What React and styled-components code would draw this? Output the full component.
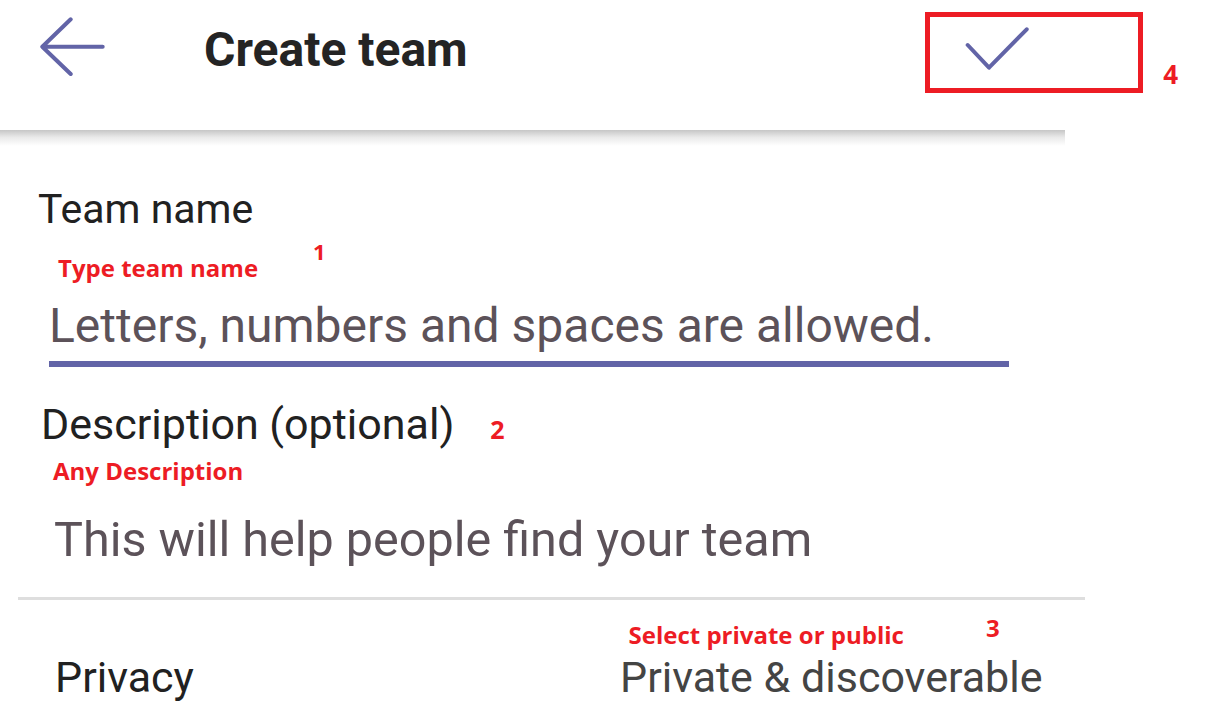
import React from "react";
import styled, { createGlobalStyle } from "styled-components";

const GlobalStyle = createGlobalStyle`
  body {
    margin: 0;
    background: #fff;
    font-family: Roboto, "Noto Sans", sans-serif;
  }
`;

const Page = styled.div`
  width: 1215px;
  height: 725px;
  overflow: hidden;
  background: #fff;
`;

const Header = styled.header`
  position: relative;
  width: 1065px;
  height: 130px;
  box-sizing: border-box;
  padding-top: 12px;
  display: flex;
  align-items: flex-start;
  background: #fff;

  &::after {
    content: "";
    position: absolute;
    left: 0;
    right: 0;
    top: 100%;
    height: 16px;
    background: linear-gradient(#c6c6c6, #e9e9e9 45%, rgba(255, 255, 255, 0));
  }
`;

const BackButton = styled.button`
  flex: none;
  margin: 5px 0 0 40px;
  padding: 0;
  border: 0;
  background: none;
  width: 66px;
  height: 60px;
  cursor: pointer;
`;

const Title = styled.h1`
  margin: 8.6px 0 0 98px;
  font-size: 48px;
  line-height: 1.2;
  font-weight: 700;
  color: #242424;
`;

const ConfirmGroup = styled.div`
  flex: none;
  display: flex;
  align-items: flex-start;
  margin-left: auto;
  margin-right: -113px;
`;

const CheckFrame = styled.div`
  width: 218px;
  height: 81px;
  box-sizing: border-box;
  border: 5px solid #ed1c24;
  padding: 9px 0 0 35px;
`;

const Form = styled.main`
  margin-left: 18px;
  width: 1067px;
  padding-top: 55px;
  display: flex;
  flex-direction: column;
`;

const FieldLabel = styled.div`
  margin: ${(p) => p.$top}px 0 0 ${(p) => p.$indent}px;
  font-size: ${(p) => p.$size}px;
  line-height: 1.2;
  color: #212121;
`;

const Note = styled.div`
  display: flex;
  align-items: flex-start;
  margin: ${(p) => p.$top || 0}px 0 0 ${(p) => p.$indent}px;
  font-family: "Open Sans", "Liberation Sans", sans-serif;
  font-weight: 700;
  font-size: 24px;
  line-height: 1.2;
  color: #ed1c24;
`;

const Marker = styled.span`
  font-family: "Open Sans", "Liberation Sans", sans-serif;
  font-weight: 700;
  font-size: ${(p) => p.$size}px;
  line-height: 1.2;
  color: #ed1c24;
  margin-left: ${(p) => p.$left}px;
  margin-top: ${(p) => p.$raise || 0}px;
`;

const TextField = styled.input`
  display: block;
  margin: ${(p) => p.$top}px 0 0 ${(p) => p.$indent}px;
  width: ${(p) => p.$width}px;
  height: 57.6px;
  padding: 0 0 ${(p) => (p.$underline ? 6 : 0)}px;
  border: 0;
  border-bottom: ${(p) => (p.$underline ? "6px solid #6264a7" : "none")};
  background: transparent;
  outline: none;
  font-family: Roboto, sans-serif;
  font-size: ${(p) => p.$size}px;
  line-height: 57.6px;
  color: #5c5259;

  &::placeholder {
    color: #5c5259;
    opacity: 1;
  }
`;

const Divider = styled.hr`
  margin: 28.6px 0 0;
  border: 0;
  height: 3px;
  background: #dedede;
`;

const PrivacyRow = styled.div`
  display: grid;
  grid-template-columns: 565px auto;
  align-items: end;
  padding-left: 37px;
  margin-top: 21.3px;
`;

const RowLabel = styled.div`
  font-size: 43px;
  line-height: 1.2;
  color: #212121;
`;

const ValueColumn = styled.div`
  display: flex;
  flex-direction: column;
`;

const RowValue = styled.div`
  margin-top: 2px;
  font-size: 43px;
  line-height: 1.2;
  color: #444;
`;

const ArrowIcon = () => (
  <svg width="66" height="60" viewBox="0 0 66 60" fill="none">
    <path
      d="M62.7 29.7H2.5M30.7 2.3L2.3 29.7L30.7 57"
      stroke="#6264a7"
      strokeWidth="4"
      strokeLinecap="round"
      strokeLinejoin="round"
    />
  </svg>
);

const CheckIcon = () => (
  <svg width="66" height="46" viewBox="0 0 66 46" fill="none">
    <path
      d="M2.7 19L24 41.7L61.7 3.3"
      stroke="#6264a7"
      strokeWidth="4"
      strokeLinecap="round"
      strokeLinejoin="round"
    />
  </svg>
);

export default function App() {
  return (
    <Page>
      <GlobalStyle />
      <Header>
        <BackButton aria-label="Back">
          <ArrowIcon />
        </BackButton>
        <Title>Create team</Title>
        <ConfirmGroup>
          <CheckFrame>
            <CheckIcon />
          </CheckFrame>
          <Marker $size={26} $left={20} $raise={46.6}>
            4
          </Marker>
        </ConfirmGroup>
      </Header>

      <Form>
        <FieldLabel $size={41} $top={0} $indent={20}>
          Team name
        </FieldLabel>
        <Note $indent={40} $top={20}>
          Type team name
          <Marker $size={22} $left={55} $raise={-16}>
            1
          </Marker>
        </Note>
        <TextField
          $top={14}
          $indent={31}
          $width={960}
          $size={48}
          $underline
          placeholder="Letters, numbers and spaces are allowed."
        />

        <FieldLabel $size={43} $top={32} $indent={23}>
          Description (optional)
          <Marker $size={25} $left={36}>
            2
          </Marker>
        </FieldLabel>
        <Note $indent={35} $top={7}>
          Any Description
        </Note>
        <TextField
          $top={24.7}
          $indent={36}
          $width={1000}
          $size={48.5}
          placeholder="This will help people find your team"
        />

        <Divider />

        <PrivacyRow>
          <RowLabel>Privacy</RowLabel>
          <ValueColumn>
            <Note $indent={8.5}>
              Select private or public
              <Marker $size={24} $left={82} $raise={-7}>
                3
              </Marker>
            </Note>
            <RowValue>Private &amp; discoverable</RowValue>
          </ValueColumn>
        </PrivacyRow>
      </Form>
    </Page>
  );
}
